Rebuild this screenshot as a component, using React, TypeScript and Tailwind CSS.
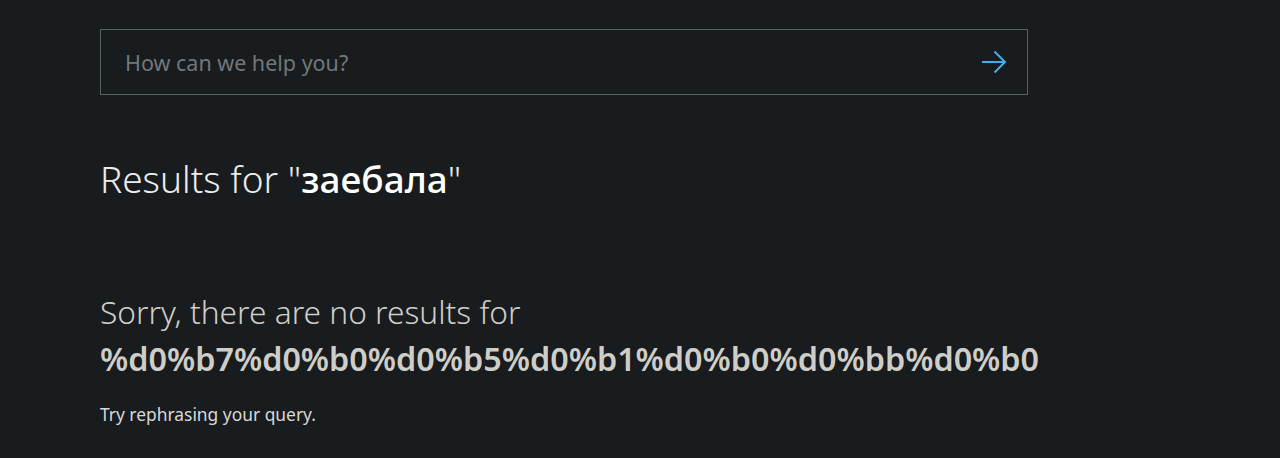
export default function App() {
  return (
    <div className="min-h-[458px] bg-[#181c1e] font-['Noto_Sans',sans-serif] overflow-hidden">
      <div className="pl-[100px] pt-[29px] w-[1028px]">
        <form className="flex items-center h-[66px] border border-[#5b6062] pl-[24px] pr-[20px]">
          <input
            placeholder="How can we help you?"
            className="flex-1 bg-transparent text-[21.5px] pt-[3px] text-[#d0d0d0] placeholder-[#73777a] outline-none"
          />
          <button type="button" className="text-[#45aee8]">
            <svg width="26" height="26" viewBox="0 0 26 26" fill="none" stroke="currentColor" strokeWidth="2">
              <path d="M1 13h23M13.5 2.5L24 13 13.5 23.5" />
            </svg>
          </button>
        </form>
      </div>
      <div className="pl-[100px]">
        <h1 className="mt-[60px] text-[37px] leading-[48px] text-[#ececec] font-light">
          Results for "<span className="font-medium text-white">заебала</span>"
        </h1>
        <div className="mt-[86px]">
          <p className="text-[31.7px] leading-[46px] text-[#cfcdc8] font-light">Sorry, there are no results for</p>
          <p className="text-[32.3px] leading-[46px] text-[#cfcdc8] font-semibold">
            %d0%b7%d0%b0%d0%b5%d0%b1%d0%b0%d0%bb%d0%b0
          </p>
        </div>
        <p className="mt-[20px] text-[17.4px] text-[#d8d8d8]">Try rephrasing your query.</p>
      </div>
    </div>
  );
}
